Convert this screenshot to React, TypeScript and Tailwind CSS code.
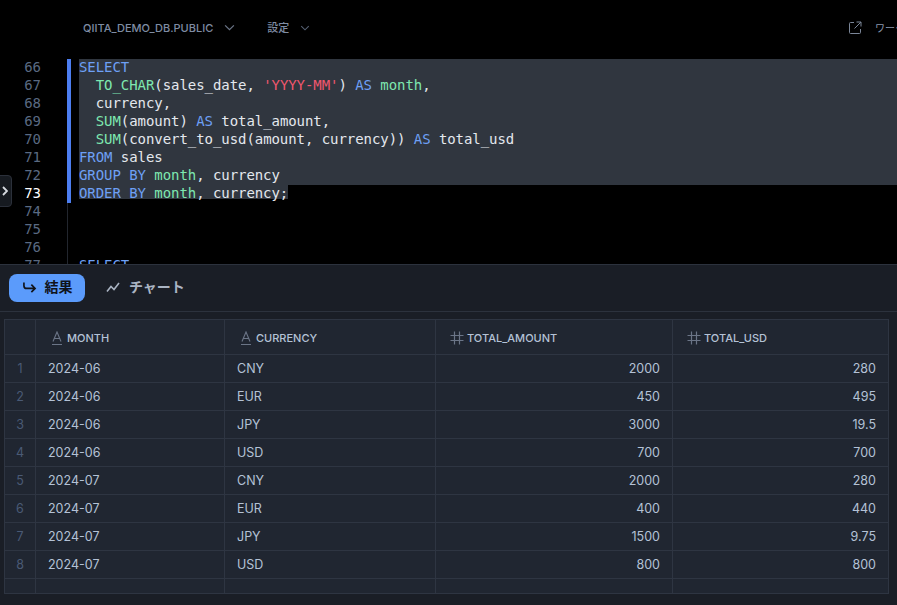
import React from 'react'

const mono = 'font-["DejaVu_Sans_Mono","Liberation_Mono",monospace]'
const ui = 'font-[Inter,"Noto_Sans_CJK_JP",sans-serif]'

const K = ({ children }: { children: React.ReactNode }) => <span className="text-[#6ea0f5]">{children}</span>
const F = ({ children }: { children: React.ReactNode }) => <span className="text-[#7ee8b0]">{children}</span>
const S = ({ children }: { children: React.ReactNode }) => <span className="text-[#f0566e]">{children}</span>

type Line = { n: number; code?: React.ReactNode; selected?: boolean; partial?: boolean }

const lines: Line[] = [
  { n: 66, selected: true, code: <K>SELECT</K> },
  { n: 67, selected: true, code: <>  <F>TO_CHAR</F>(sales_date, <S>'YYYY-MM'</S>) <K>AS</K> <F>month</F>,</> },
  { n: 68, selected: true, code: <>  currency,</> },
  { n: 69, selected: true, code: <>  <F>SUM</F>(amount) <K>AS</K> total_amount,</> },
  { n: 70, selected: true, code: <>  <F>SUM</F>(convert_to_usd(amount, currency)) <K>AS</K> total_usd</> },
  { n: 71, selected: true, code: <><K>FROM</K> sales</> },
  { n: 72, selected: true, code: <><K>GROUP BY</K> <F>month</F>, currency</> },
  { n: 73, partial: true, code: <><K>ORDER BY</K> <F>month</F>, currency;</> },
  { n: 74 },
  { n: 75 },
  { n: 76 },
  { n: 77, code: <K>SELECT</K> },
]

const rows = [
  ['1', '2024-06', 'CNY', '2000', '280'],
  ['2', '2024-06', 'EUR', '450', '495'],
  ['3', '2024-06', 'JPY', '3000', '19.5'],
  ['4', '2024-06', 'USD', '700', '700'],
  ['5', '2024-07', 'CNY', '2000', '280'],
  ['6', '2024-07', 'EUR', '400', '440'],
  ['7', '2024-07', 'JPY', '1500', '9.75'],
  ['8', '2024-07', 'USD', '800', '800'],
  ['', '', '', '', ''],
]

const Chevron = ({ className }: { className: string }) => (
  <svg viewBox="0 0 12 8" fill="none" stroke="currentColor" strokeWidth="1.4" className={className}>
    <path d="M1 1.5 6 6.5 11 1.5" />
  </svg>
)

const TextIcon = () => (
  <svg viewBox="0 0 12 15" fill="none" stroke="#6b7587" strokeWidth="1.1" className="w-[12px] h-[15px] shrink-0">
    <path d="M2 10.5 6 1l4 9.5M3.2 7.5h5.6M1 13.5h10" />
  </svg>
)

const HashIcon = () => (
  <svg viewBox="0 0 14 14" fill="none" stroke="#6b7587" strokeWidth="1.2" className="w-[14px] h-[14px] shrink-0">
    <path d="M4.5 0.5v13M9.5 0.5v13M0.5 4.5h13M0.5 9.5h13" />
  </svg>
)

const HeadCell = ({ icon, label }: { icon: React.ReactNode; label: string }) => (
  <div className="h-[34px] pt-[2px] pl-[13px] flex items-center gap-[2px] border-l border-[#2e3542] text-[11px] font-medium text-[#b4c2d6]">
    <span className="w-[16px] flex justify-center">{icon}</span>
    {label}
  </div>
)

export default function App() {
  return (
    <div className={`w-[897px] h-[605px] bg-black overflow-hidden flex flex-col relative ${ui}`}>
      <header className="h-[58px] shrink-0 flex items-start pt-[20px] pl-[83px] pr-0">
        <span className="text-[11px] leading-[16px] font-medium text-[#7f8ca3]">QIITA_DEMO_DB.PUBLIC</span>
        <Chevron className="w-[11px] h-[7px] ml-[11px] mt-[4px] text-[#6b7587]" />
        <span className="ml-[32px] text-[11px] leading-[16px] font-medium text-[#7f8ca3]">設定</span>
        <Chevron className="w-[10px] h-[6px] ml-[11px] mt-[5px] text-[#566073]" />
        <svg viewBox="0 0 14 14" fill="none" stroke="#7b8698" strokeWidth="1" className="w-[14px] h-[14px] ml-auto mt-[1px]">
          <path d="M6 1.5H2.5a1 1 0 0 0-1 1v9a1 1 0 0 0 1 1h9a1 1 0 0 0 1-1V8M8.5 1h4.5v4.5M13 1 6.5 7.5" />
        </svg>
        <span className="ml-[13px] w-[22px] overflow-hidden whitespace-nowrap text-[10px] leading-[16px] text-[#8a97ad]">ワークシート</span>
      </header>

      <section className="h-[206px] shrink-0 overflow-hidden relative">
        {lines.map((line) => (
          <div key={line.n} className={`flex h-[18px] text-[14px] leading-[18px] tracking-[-0.06px] ${mono}`}>
            <div className={`w-[41px] shrink-0 text-right ${line.n === 73 ? 'text-white' : 'text-[#5a6a82]'}`}>{line.n}</div>
            <div
              className={`ml-[26px] w-[4px] shrink-0 ${
                line.n === 66
                  ? 'bg-[#4d7ef0] border-t border-transparent bg-clip-padding'
                  : line.n === 73
                    ? 'bg-[#4d7ef0] h-[19px] self-start relative'
                    : line.selected
                      ? 'bg-[#4d7ef0]'
                      : 'border-l border-[#22262e]'
              }`}
            />
            <div
              className={`ml-[8px] flex-1 whitespace-pre text-[#e4e8ee] ${
                line.n === 66
                  ? 'bg-[#30363f] border-t border-transparent bg-clip-padding leading-[16px]'
                  : line.selected
                    ? 'bg-[#30363f]'
                    : line.partial
                      ? 'border-t border-[#30363f] leading-[16px]'
                      : ''
              }`}
            >
              {line.partial ? <span className="bg-[#30363f] inline-block h-[14px] leading-[16px]">{line.code}</span> : line.code}
            </div>
          </div>
        ))}
        <button className="absolute left-[-4px] top-[117px] w-[16px] h-[32px] flex items-center justify-end pr-[3px] bg-[#161a20] border border-[#2b303a] rounded-[4px] text-[#d6dae0]">
          <svg viewBox="0 0 6 10" fill="none" stroke="currentColor" strokeWidth="1.8" className="w-[6px] h-[10px]">
            <path d="M1 1l4 4-4 4" />
          </svg>
        </button>
      </section>

      <section className="flex-1 min-h-0 bg-[#1a1e26] border-t border-[#2c323d] flex flex-col">
        <div className="h-[47px] shrink-0 flex items-center pl-[9px] gap-[21px] border-b border-[#2c323d]">
          <div className="h-[28px] w-[76px] rounded-[8px] bg-[#5b9bfb] flex items-center justify-center gap-[8px] text-[14px] leading-[20px] font-semibold text-[#10141b] pb-[2px]">
            <svg viewBox="0 0 16 14" fill="none" stroke="currentColor" strokeWidth="1.8" className="w-[15px] h-[13px]">
              <path d="M2 1.5v3.5a3 3 0 0 0 3 3h9M10 4l4 4-4 4" />
            </svg>
            結果
          </div>
          <div className="flex items-center gap-[9px] text-[14px] leading-[20px] font-semibold text-[#aab4c3] pb-[2px]">
            <svg viewBox="0 0 14 12" fill="none" stroke="currentColor" strokeWidth="1.6" className="w-[14px] h-[12px]">
              <path d="M1 10.5 5 5.5l3 3 5-6.5" />
            </svg>
            チャート
          </div>
        </div>

        <div className="mt-[7px] mx-[4px] mr-[8px] h-[275px] bg-[#202631] border border-[#2e3542] overflow-hidden">
          <div className="grid grid-cols-[30px_189px_211px_237px_1fr] border-b border-[#2e3542]">
            <div className="h-[34px]" />
            <HeadCell icon={<TextIcon />} label="MONTH" />
            <HeadCell icon={<TextIcon />} label="CURRENCY" />
            <HeadCell icon={<HashIcon />} label="TOTAL_AMOUNT" />
            <HeadCell icon={<HashIcon />} label="TOTAL_USD" />
          </div>
          {rows.map((row, i) => (
            <div key={i} className="grid grid-cols-[30px_189px_211px_237px_1fr] h-[28px] border-b border-[#2e3542] text-[12.5px] leading-[27px] text-[#b4c2d6]">
              <div className="text-center text-[#4a5a75]">{row[0]}</div>
              <div className="pl-[12px] border-l border-[#2e3542]">{row[1]}</div>
              <div className="pl-[12px] border-l border-[#2e3542]">{row[2]}</div>
              <div className="pr-[12px] text-right border-l border-[#2e3542]">{row[3]}</div>
              <div className="pr-[12px] text-right border-l border-[#2e3542]">{row[4]}</div>
            </div>
          ))}
        </div>
      </section>
    </div>
  )
}
